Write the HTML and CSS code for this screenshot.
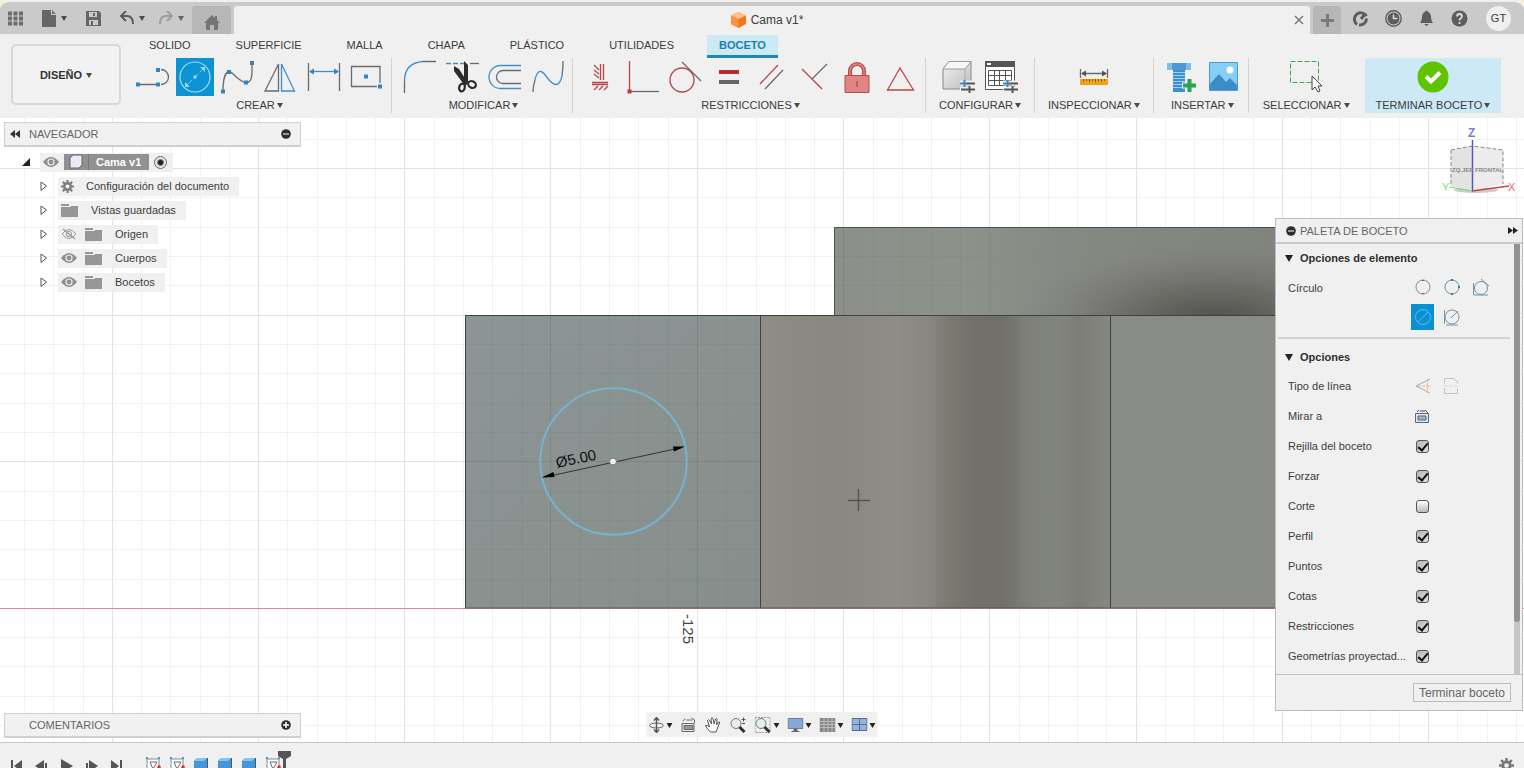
FILE: index.html
```html
<!DOCTYPE html>
<html lang="es">
<head>
<meta charset="utf-8">
<title>Cama v1*</title>
<link rel="stylesheet" href="styles.css">
</head>
<body>
<svg class="defs" aria-hidden="true">
  <defs>
    <linearGradient id="gCube" x1="0" y1="0" x2="1" y2="1"><stop offset="0" stop-color="#f2f2f2"/><stop offset="1" stop-color="#bdbdbd"/></linearGradient>
  </defs>
  <symbol id="caret" viewBox="0 0 6 6"><path d="M0 1h6L3 6z" fill="currentColor"/></symbol>
  <symbol id="eye" viewBox="0 0 16 12"><path d="M0 6Q8-4 16 6 8 16 0 6z" fill="#8f8f8f"/><circle cx="8" cy="6" r="3.6" fill="#f0f0f0"/><circle cx="8" cy="6" r="2.4" fill="#8f8f8f"/></symbol>
  <symbol id="eyeoff" viewBox="0 0 16 12"><path d="M1 6Q8-3 15 6 8 15 1 6z" fill="none" stroke="#9a9a9a"/><circle cx="8" cy="6" r="2.6" fill="none" stroke="#9a9a9a"/><path d="M2 1l12 10" stroke="#9a9a9a" stroke-width="1.4"/></symbol>
  <symbol id="folder" viewBox="0 0 17 13"><path d="M0 0h8v2H0zM0 3h9l1-1h7v11H0z" fill="#969696"/></symbol>
  <symbol id="gear" viewBox="0 0 16 16"><circle cx="8" cy="8" r="4" fill="none" stroke="currentColor" stroke-width="3"/><path d="M8 0v3M8 13v3M0 8h3M13 8h3M2.3 2.3l2.2 2.2M11.5 11.5l2.2 2.2M13.7 2.3l-2.2 2.2M4.5 11.5l-2.2 2.2" stroke="currentColor" stroke-width="2.6"/></symbol>
  <symbol id="closed" viewBox="0 0 8 10"><path d="M1 1v8.500l5.500-4.500z" fill="#fff" stroke="#555"/></symbol>
  <symbol id="minus" viewBox="0 0 10 10"><circle cx="5" cy="5" r="4.800" fill="#2e2e2e"/><path d="M2 5h6" stroke="#bbb" stroke-width="1.500"/></symbol>
  <symbol id="plusdot" viewBox="0 0 10 10"><circle cx="5" cy="5" r="4.800" fill="#2e2e2e"/><path d="M2 5h6M5 2v6" stroke="#fff" stroke-width="1.500"/></symbol>
  <symbol id="sliders" viewBox="0 0 15 13"><path d="M0 3h15M0 9h15" stroke="#f0f0f0" stroke-width="5"/><path d="M6 3.500h9M1 9.500h14" stroke="#555" stroke-width="2"/><path d="M0 3.500h6M4.500 0v7" stroke="#3f87bf" stroke-width="2"/><path d="M9.500 6v7" stroke="#555" stroke-width="2"/></symbol>
  <symbol id="sk" viewBox="0 0 17 17"><rect x="2" y="2" width="12" height="13" fill="#fff" stroke="#7a8fa0"/><path d="M5 5h7l-4 7z" fill="none" stroke="#667"/><path d="M1 1h2M13 1h2" stroke="#4a9bd0" stroke-width="2"/><circle cx="14" cy="10" r="1.800" fill="#d33"/></symbol>
  <symbol id="ext" viewBox="0 0 17 17"><path d="M1 4l3-3h10v12l-2 3H1z" fill="#4596d6"/><path d="M1 4l3-3h10l-3 3z" fill="#86c3ee"/><path d="M14.500 1v14" stroke="#555"/></symbol>
</svg>

<header class="app-head">
  <div class="titlebar">
    <nav class="quick" aria-label="Acceso rápido">
      <button aria-label="Panel de datos"><svg width="15" height="15"><path d="M0 2.500h4M5.500 2.500h4M11 2.500h4M0 7.500h4M5.500 7.500h4M11 7.500h4M0 12.500h4M5.500 12.500h4M11 12.500h4" stroke="#6c6c6c" stroke-width="4"/></svg></button>
      <button aria-label="Archivo"><svg width="14" height="17"><path d="M0 0h9v5h5v12H0z" fill="#666"/><path d="M10 0l4 4h-4z" fill="#777"/></svg><svg class="caret"><use href="#caret"/></svg></button>
      <button aria-label="Guardar"><svg width="15" height="15"><path d="M0 0h13l2 2v13H0z" fill="#666"/><path d="M3 1h8v5H3zM3 9h9v5H3z" fill="#cacaca"/><path d="M7 2h2v3H7zM5 10h2v4H5z" fill="#666"/></svg></button>
      <span class="pair">
        <button aria-label="Deshacer"><svg width="14" height="14"><path d="M1 5h6q6 0 6 8" fill="none" stroke="#5c5c5c" stroke-width="2"/><path d="M6 0L1 5l5 5" fill="none" stroke="#5c5c5c" stroke-width="2"/></svg><svg class="caret"><use href="#caret"/></svg></button>
        <button class="off" aria-label="Rehacer"><svg width="14" height="14"><path d="M13 5H7q-6 0-6 8" fill="none" stroke="#929292" stroke-width="2"/><path d="M8 0l5 5-5 5" fill="none" stroke="#929292" stroke-width="2"/></svg><svg class="caret"><use href="#caret"/></svg></button>
      </span>
    </nav>
    <button class="home" aria-label="Inicio"><svg width="16" height="15"><path d="M8 0l3 3V1h2v4l3 3h-2v7h-4v-5H6v5H2V8H0z" fill="#757575"/></svg></button>
    <div class="doc-tab">
      <span class="doc-name"><svg width="15" height="16"><path d="M7.500 0L15 3.500v8.500L7.500 16 0 12V3.500z" fill="#f07818"/><path d="M7.500 0L15 3.500 7.500 7 0 3.500z" fill="#ffc089"/><path d="M0 3.500L7.500 7v9L0 12z" fill="#ff9440"/></svg>Cama v1*</span>
      <button aria-label="Cerrar"><svg width="10" height="10"><path d="M1 1l8 8M9 1L1 9" stroke="#777" stroke-width="1.500"/></svg></button>
    </div>
    <button class="newtab" aria-label="Nuevo"><svg width="13" height="13"><path d="M6.500 0v13M0 6.500h13" stroke="#7a7a7a" stroke-width="3"/></svg></button>
    <div class="account">
      <button aria-label="Extensiones"><svg width="17" height="17"><path d="M5 14.500A6.500 6.500 0 1 1 14.500 6" fill="none" stroke="#5d5d5d" stroke-width="3"/><path d="M14.500 8.500A6.500 6.500 0 0 1 7 15" fill="none" stroke="#5d5d5d" stroke-width="3"/><path d="M9 9l4-5" stroke="#5d5d5d" stroke-width="3"/></svg></button>
      <button aria-label="Trabajos"><svg width="17" height="17"><circle cx="8.500" cy="8.500" r="7.700" fill="none" stroke="#5d5d5d" stroke-width="1.400"/><circle cx="8.500" cy="8.500" r="6" fill="#5d5d5d"/><path d="M8.500 4.500v4h4" fill="none" stroke="#ddd" stroke-width="1.500"/></svg></button>
      <button aria-label="Notificaciones"><svg width="15" height="16"><path d="M1 13q2-2 2-7 1-4 3.500-4.500a1 1 0 0 1 2 0Q11 2 12 6q0 5 2 7zM5 14h5l-2.500 2z" fill="#5d5d5d"/></svg></button>
      <button aria-label="Ayuda"><svg width="17" height="17"><circle cx="8.500" cy="8.500" r="8" fill="#5d5d5d"/><path d="M6 6.500q0-2.500 2.500-2.500T11 6.500q0 1-1.500 2-1 .500-1 2M8.500 12v2" fill="none" stroke="#ddd" stroke-width="1.800"/></svg></button>
      <button class="avatar">GT</button>
    </div>
  </div>

  <div class="ribbon">
    <button class="workspace">DISEÑO <svg class="caret"><use href="#caret"/></svg></button>
    <div class="ribbon-main">
      <nav class="tabs" aria-label="Fichas">
        <button>SOLIDO</button><button>SUPERFICIE</button><button>MALLA</button><button>CHAPA</button><button>PLÁSTICO</button><button>UTILIDADES</button><button class="current">BOCETO</button>
      </nav>
      <div class="groups">
        <section class="group first">
          <div class="tools">
            <button aria-label="Línea"><svg class="ic"><path d="M5 26.500h20M28 11.500a7.500 7.500 0 0 1 0 15" class="g"/><path d="M3 24.500h4v4H3zM23 24.500h4v4h-4zM23 10h4v4h-4z" class="bf"/></svg></button>
            <button class="on" aria-label="Círculo"><svg class="ic"><circle cx="19" cy="19" r="15" fill="none" stroke="#a8dcf5" stroke-width="1.200"/><path d="M11 27L27 11" stroke="#7cc8ee" stroke-dasharray="7 2"/><path d="M9 29v-5l5 5zM29 9v5l-5-5zM17.500 17.500h3v3h-3z" fill="#9ad6f4"/></svg></button>
            <button aria-label="Spline"><svg class="ic"><path d="M4 33C4 20 7 14 10 13.500S20 24 27 24.500 33 14 33 5" class="g"/><path d="M2 31.500h4v4H2zM8 12h4v4H8zM25 22.500h4v4h-4zM31 3h4v4h-4z" class="bf"/></svg></button>
            <button aria-label="Simetría"><svg class="ic"><path d="M3 33L16.500 6v27z" class="g"/><path d="M19.500 6v27h13z" class="b"/></svg></button>
            <button aria-label="Cota"><svg class="ic"><path d="M3.500 5v28M34.500 5v28" class="g"/><path d="M5 13.500h28" class="b"/><path d="M4 13.500l5-3v6zM34 13.500l-5-3v6z" class="bf"/></svg></button>
            <button aria-label="Rectángulo"><svg class="ic"><path d="M32 25V8.500H3.500v20H29" class="g"/><path d="M16 16.500h4v4h-4zM30 26.500h4v4h-4z" class="bf"/></svg></button>
          </div>
          <button class="glabel">CREAR <svg class="caret"><use href="#caret"/></svg></button>
        </section>
        <section class="group">
          <div class="tools">
            <button aria-label="Empalme"><svg class="ic"><path d="M4.500 23v12M23 3.500h13" class="g"/><path d="M4.500 23q0-18 18.500-19.500" class="b"/></svg></button>
            <button aria-label="Recortar"><svg class="ic"><path d="M3 5.500h18" class="b" stroke-dasharray="5 2"/><path d="M27 5.500h9" class="g"/><path d="M21 3l4 4v17l-4 1zM11 8l5 3 9 14-3 3L11 13z" fill="#2c2c2c"/><ellipse cx="19" cy="29.500" rx="2.800" ry="4" fill="none" stroke="#2c2c2c" stroke-width="2.200" transform="rotate(15 19 29.500)"/><ellipse cx="29" cy="26.500" rx="4" ry="3.200" fill="none" stroke="#2c2c2c" stroke-width="2.200" transform="rotate(25 29 26.500)"/></svg></button>
            <button aria-label="Desfase"><svg class="ic"><path d="M35 7.500H14.500a11.500 11.500 0 0 0 0 23H35" class="b"/><path d="M35 12.500H17a6.500 6.500 0 0 0 0 13h18" class="g"/></svg></button>
            <button aria-label="Curva"><svg class="ic"><path d="M4 34q0-6 2-12M33 18q1-7 1-15" class="g"/><path d="M6 22q2-9 6-8.500C16 14 21 27 27 26.500q4 0 6-8.500" class="b"/></svg></button>
          </div>
          <button class="glabel">MODIFICAR <svg class="caret"><use href="#caret"/></svg></button>
        </section>
        <section class="group">
          <div class="tools">
            <button aria-label="Fijar horizontal o vertical"><svg class="ic"><path d="M19.500 6v16M22.500 6v16M11 24.500h16M11 26.500h16" class="r"/><path d="M13 7l5 5M13 12l5 4M13 16l5 4M13 32l4-4M18 32l4-4M23 32l4-4" class="r"/></svg></button>
            <button aria-label="Coincidente"><svg class="ic"><path d="M5.500 3v30" class="r"/><path d="M7 33.500h28" class="g"/><path d="M3.500 31.500h4v4h-4z" fill="#b93a3a"/></svg></button>
            <button aria-label="Tangente"><svg class="ic"><circle cx="15" cy="22" r="12" class="r"/><path d="M15 4l19 19" class="g"/></svg></button>
            <button aria-label="Igual"><svg class="ic"><path d="M9 12h20v4H9z" fill="#b52f30"/><path d="M9 22h20v4H9z" fill="#666"/></svg></button>
            <button aria-label="Paralelo"><svg class="ic"><path d="M7 26L25 7" class="r"/><path d="M12 31l18-19" class="g"/></svg></button>
            <button aria-label="Perpendicular"><svg class="ic"><path d="M6 11l20 20" class="r"/><path d="M16 21L31 6" class="g"/></svg></button>
            <button aria-label="Bloquear"><svg class="ic"><path d="M11 17v-4a7 7 0 0 1 14 0v4" fill="none" stroke="#b94a4a" stroke-width="4"/><path d="M11 17v-4a7 7 0 0 1 14 0v4" fill="none" stroke="#e08a8a" stroke-width="1.500"/><path d="M6 17.500h24v17H6z" fill="#e08585" stroke="#b94a4a"/><path d="M18 23v6" class="r"/></svg></button>
            <button aria-label="Simétrico"><svg class="ic"><path d="M18 10L5.500 32h26z" class="r"/></svg></button>
          </div>
          <button class="glabel">RESTRICCIONES <svg class="caret"><use href="#caret"/></svg></button>
        </section>
        <section class="group wide">
          <div class="tools">
            <button aria-label="Configurar modelo"><svg class="ic"><path d="M4 11l6-7.500h22V25l-5 6H4z" fill="url(#gCube)" stroke="#888"/><path d="M4 11l6-7.500h22L26 11z" fill="#f7f7f7" stroke="#999"/><path d="M26 11v20" stroke="#aaa"/><use href="#sliders" x="21" y="22" width="15" height="13"/></svg></button>
            <button aria-label="Tabla de configuración"><svg class="ic"><path d="M3.500 3.500h29v28h-29z" fill="#fff" stroke="#555"/><path d="M3 3h30v6H3z" fill="#555"/><path d="M5 5h4v2H5z" fill="#fff"/><path d="M6.500 12.500h23v15h-23zM6 17.500h24M6 22.500h24M12.500 12v15M17.500 12v15M23.500 12v15" fill="none" stroke="#555"/><use href="#sliders" x="21" y="22" width="15" height="13"/></svg></button>
          </div>
          <button class="glabel">CONFIGURAR <svg class="caret"><use href="#caret"/></svg></button>
        </section>
        <section class="group wide">
          <div class="tools">
            <button aria-label="Medir"><svg class="ic"><path d="M5.500 11v9M32.500 11v9M7 15.500h24" class="g"/><path d="M6 15.500l5-3v6zM32 15.500l-5-3v6z" fill="#555"/><path d="M5 21h28v6H5z" fill="#f0a31a"/><path d="M8.500 21v3M11.500 21v2M14.500 21v3M17.500 21v2M20.500 21v3M23.500 21v2M26.500 21v3M29.500 21v2" stroke="#8a5a00"/></svg></button>
          </div>
          <button class="glabel">INSPECCIONAR <svg class="caret"><use href="#caret"/></svg></button>
        </section>
        <section class="group">
          <div class="tools">
            <button aria-label="Insertar fijación"><svg class="ic"><path d="M5 5h24v7H5z" fill="#4d9ad0"/><path d="M5 5h5v7H5zM24 5h5v7h-5z" fill="#7fbce6"/><path d="M11 12h12v22H11z" fill="#3d8fd0"/><path d="M11 14.500h12M11 17.500h12M11 20.500h12M11 23.500h12M11 26.500h12M11 29.500h12" stroke="#9ad2f5"/><path d="M27.500 20v15M20 27.500h15" stroke="#f0f0f0" stroke-width="6"/><path d="M27.500 21v13M21 27.500h13" stroke="#2aa44f" stroke-width="4"/></svg></button>
            <button aria-label="Insertar imagen"><svg class="ic"><path d="M4.500 4.500h28v28h-28z" fill="#86cdf8" stroke="#4a9bd0"/><path d="M5 26l9-10 7 8 4-4 7 7v5H5z" fill="#3a8dc6"/><circle cx="25" cy="12" r="3.500" fill="#fff"/></svg></button>
          </div>
          <button class="glabel">INSERTAR <svg class="caret"><use href="#caret"/></svg></button>
        </section>
        <section class="group wide last">
          <div class="tools">
            <button aria-label="Seleccionar"><svg class="ic"><path d="M3.500 3.500h28v21h-28z" fill="none" stroke="#3aa75a" stroke-dasharray="5 2"/><path d="M25 18v14l3-3 3 5 2-1-2-5h4z" fill="#fff" stroke="#444"/></svg></button>
          </div>
          <button class="glabel">SELECCIONAR <svg class="caret"><use href="#caret"/></svg></button>
        </section>
        <section class="group finish">
          <div class="tools">
            <button aria-label="Terminar boceto"><svg class="ic"><circle cx="19" cy="19" r="15.500" fill="#5fc400"/><path d="M12 18.500l5 5 9-9" fill="none" stroke="#fff" stroke-width="4"/></svg></button>
          </div>
          <button class="glabel">TERMINAR BOCETO <svg class="caret"><use href="#caret"/></svg></button>
        </section>
      </div>
    </div>
  </div>
</header>

<main class="stage">
  <svg class="scene" viewBox="0 118 1524 624" preserveAspectRatio="xMidYMid slice" role="img" aria-label="Boceto">
    <defs>
      <linearGradient id="gLeft" x1="0" y1="0" x2="1" y2="1"><stop offset="0" stop-color="#8b9695"/><stop offset=".5" stop-color="#8a9290"/><stop offset="1" stop-color="#878f8d"/></linearGradient>
      <linearGradient id="gMid" gradientUnits="userSpaceOnUse" x1="761" y1="0" x2="1110" y2="0"><stop offset="0" stop-color="#8f8c86"/><stop offset=".22" stop-color="#8a8780"/><stop offset=".39" stop-color="#908d87"/><stop offset=".48" stop-color="#888680"/><stop offset=".54" stop-color="#7a7a70"/><stop offset=".62" stop-color="#706f69"/><stop offset=".69" stop-color="#706f6a"/><stop offset=".76" stop-color="#7d7f78"/><stop offset=".85" stop-color="#82857e"/><stop offset=".91" stop-color="#7b7d76"/><stop offset="1" stop-color="#868981"/></linearGradient>
      <linearGradient id="gTop" gradientUnits="userSpaceOnUse" x1="835" y1="0" x2="1275" y2="0"><stop offset="0" stop-color="#8d908a"/><stop offset=".3" stop-color="#8c918a"/><stop offset=".6" stop-color="#858781"/><stop offset="1" stop-color="#81837d"/></linearGradient>
      <radialGradient id="gDark" gradientUnits="userSpaceOnUse" cx="0" cy="0" r="1" gradientTransform="translate(1215 322) scale(200 78)"><stop offset="0" stop-color="#4b4b47" stop-opacity=".95"/><stop offset=".45" stop-color="#555550" stop-opacity=".5"/><stop offset="1" stop-color="#777" stop-opacity="0"/></radialGradient>
      <linearGradient id="gFade" gradientUnits="userSpaceOnUse" x1="900" y1="0" x2="1110" y2="0"><stop offset="0" stop-color="#fff"/><stop offset="1" stop-color="#000"/></linearGradient>
      <mask id="mFade"><path d="M465 315h296v293H465z" fill="#fff"/><path d="M835 227h440v88H835z" fill="url(#gFade)"/></mask>
      <g id="grid">
        <path stroke-opacity=".45" d="M24.500 118v624M53.500 118v624M83.500 118v624M141.500 118v624M170.500 118v624M200.500 118v624M229.500 118v624M287.500 118v624M317.500 118v624M346.500 118v624M375.500 118v624M434.500 118v624M463.500 118v624M492.500 118v624M522.500 118v624M580.500 118v624M609.500 118v624M638.500 118v624M668.500 118v624M726.500 118v624M756.500 118v624M785.500 118v624M814.500 118v624M873.500 118v624M902.500 118v624M931.500 118v624M960.500 118v624M1019.500 118v624M1048.500 118v624M1077.500 118v624M1106.500 118v624M1165.500 118v624M1194.500 118v624M1223.500 118v624M1253.500 118v624M1311.500 118v624M1340.500 118v624M1370.500 118v624M1399.500 118v624M1457.500 118v624M1487.500 118v624M1516.500 118v624M0 139.500h1524M0 197.500h1524M0 227.500h1524M0 256.500h1524M0 285.500h1524M0 344.500h1524M0 373.500h1524M0 403.500h1524M0 432.500h1524M0 491.500h1524M0 520.500h1524M0 549.500h1524M0 579.500h1524M0 637.500h1524M0 666.500h1524M0 696.500h1524M0 725.500h1524"/>
        <path d="M112.500 118v624M258.500 118v624M404.500 118v624M550.500 118v624M697.500 118v624M843.500 118v624M989.500 118v624M1136.500 118v624M1282.500 118v624M1428.500 118v624M0 168.500h1524M0 315.500h1524M0 461.500h1524"/>
      </g>
    </defs>
    <path d="M0 118h1524v624H0z" fill="#fff"/>
    <use href="#grid" stroke="#e2e2e2"/>
    <path d="M0 608.500h1524" stroke="#d98a94"/>
    <path d="M834.500 227.500h500v88h-500z" fill="url(#gTop)"/>
    <path d="M834.500 227.500h500v88h-500z" fill="url(#gDark)" stroke="#4d504d"/>
    <path d="M465.500 315.500h295.500v292.500h-295.500z" fill="url(#gLeft)"/>
    <path d="M761 315.500h349.500v292.500h-349.500z" fill="url(#gMid)"/>
    <path d="M1110 315.500h225v292.500h-225z" fill="#898c86"/>
    <use href="#grid" stroke="#4c5a58" opacity=".2" mask="url(#mFade)"/>
    <path d="M465.500 608V315.500h870M760.500 315v293M1110.500 315v293" fill="none" stroke="#3c423f"/>
    <path d="M465 608h870" stroke="#6b4c50"/>
    <circle cx="613.500" cy="461.500" r="73.200" fill="none" stroke="#78b2cd" stroke-width="2"/>
    <path d="M545 477l137-29.500" stroke="#333"/>
    <path d="M541.500 477.500l12-5.500 1 5zM685 446.500l-12 0 1 5z" fill="#000"/>
    <circle cx="613" cy="461.500" r="3.500" fill="#eee" stroke="#777"/>
    <text x="557" y="468" transform="rotate(-12 557 468)" class="dim">Ø5.00</text>
    <text x="683" y="614" transform="rotate(90 683 614)" class="axis">-125</text>
    <path d="M848 500.500h22M858.500 489v22" stroke="#55544f" stroke-width="1.500"/>
  </svg>

  <div class="overlay">
    <div class="left">
      <aside class="browser">
        <h2 class="bar"><svg width="10" height="8"><path d="M5 0v8L0 4zM10 0v8L5 4z" fill="#333"/></svg><span>NAVEGADOR</span><button aria-label="Contraer"><svg width="10" height="10"><use href="#minus"/></svg></button></h2>
        <ul class="tree">
          <li class="root"><svg width="8" height="8"><path d="M8 0v8H0z" fill="#222"/></svg><div class="node"><svg width="16" height="12"><use href="#eye"/></svg><span class="doc"><svg width="22" height="16"><path d="M3 4l3-3h9v10l-3 3H3z" fill="#e9ebf2" stroke="#667"/><path d="M21.500 0v16" stroke="#777"/></svg>Cama v1</span><input type="radio" checked aria-label="Activar componente"></div></li>
          <li><svg width="8" height="10"><use href="#closed"/></svg><div class="node conf"><svg width="13" height="13" color="#7c7c7c"><use href="#gear"/></svg><span>Configuración del documento</span></div></li>
          <li><svg width="8" height="10"><use href="#closed"/></svg><div class="node"><svg width="17" height="13"><use href="#folder"/></svg><span>Vistas guardadas</span></div></li>
          <li><svg width="8" height="10"><use href="#closed"/></svg><div class="node"><svg width="16" height="12"><use href="#eyeoff"/></svg><svg width="17" height="13"><use href="#folder"/></svg><span>Origen</span></div></li>
          <li><svg width="8" height="10"><use href="#closed"/></svg><div class="node"><svg width="16" height="12"><use href="#eye"/></svg><svg width="17" height="13"><use href="#folder"/></svg><span>Cuerpos</span></div></li>
          <li><svg width="8" height="10"><use href="#closed"/></svg><div class="node"><svg width="16" height="12"><use href="#eye"/></svg><svg width="17" height="13"><use href="#folder"/></svg><span>Bocetos</span></div></li>
        </ul>
      </aside>
      <h2 class="bar comments"><span>COMENTARIOS</span><button aria-label="Expandir"><svg width="10" height="10"><use href="#plusdot"/></svg></button></h2>
    </div>

    <div class="viewbar" role="toolbar" aria-label="Navegación">
      <button aria-label="Órbita"><svg width="16" height="16"><ellipse cx="8" cy="8.500" rx="7" ry="2.500" fill="none" stroke="#666"/><path d="M8 1v14M5.500 3.500L8 .500l2.500 3M5.500 12.500L8 15.500l2.500-3" fill="none" stroke="#555" stroke-width="1.400"/></svg><svg class="caret"><use href="#caret"/></svg></button>
      <button aria-label="Mirar a"><svg width="16" height="16"><path d="M1.500 6.500h12v8h-12z" fill="#eee" stroke="#666"/><path d="M3.500 8.500h9v4h-9z" fill="#999" stroke="#666"/><path d="M2 4l3-2M6 3h6M11 1l3 2v3" fill="none" stroke="#666"/></svg></button>
      <button aria-label="Encuadre"><svg width="17" height="16"><path d="M5 14Q2 11 1 8.500q1.500-1 4 1.500L3 3.500q1-1.500 2 0L7 7 6.500 1.500q1-1.500 2 0L9.500 7l1.500-5q1.500-1 1.500.500L12 8l2-3q1.500-.500 1 1l-2 5-1.500 4H6z" fill="#fff" stroke="#555"/></svg></button>
      <button aria-label="Zoom"><svg width="17" height="16"><circle cx="6.500" cy="6.500" r="5" fill="#e4efe9" stroke="#777"/><path d="M10 10l5 5" stroke="#333" stroke-width="3"/><path d="M12 2.500h4M14 .500v4M12.500 6.500h3" stroke="#555"/></svg></button>
      <button aria-label="Ventana de zoom"><svg width="17" height="16"><path d="M.500.500h15v15H.500z" fill="none" stroke="#999" stroke-dasharray="2 1"/><circle cx="6.500" cy="6.500" r="5" fill="#e4efe9" stroke="#777"/><path d="M10 10l5 5" stroke="#333" stroke-width="3"/></svg><svg class="caret"><use href="#caret"/></svg></button>
      <button aria-label="Visualización"><svg width="16" height="16"><path d="M.500 1.500h15v10H.500z" fill="#85a8d6" stroke="#6c7f99"/><path d="M6 12h4v2h2v1H4v-1h2z" fill="#666"/></svg><svg class="caret"><use href="#caret"/></svg></button>
      <button aria-label="Rejilla"><svg width="16" height="16"><path d="M0 1h16v14H0z" fill="#888"/><path d="M0 4.500h16M0 7.500h16M0 10.500h16M4.500 1v14M8.500 1v14M12.500 1v14" stroke="#bbb"/></svg><svg class="caret"><use href="#caret"/></svg></button>
      <button aria-label="Ventanas gráficas"><svg width="16" height="16"><path d="M.500 1.500h15v12H.500z" fill="#94b4df" stroke="#566d8d"/><path d="M8 2v12M1 7.500h14" stroke="#566d8d"/></svg><svg class="caret"><use href="#caret"/></svg></button>
    </div>

    <div class="right">
      <svg class="cube" width="80" height="82" role="img" aria-label="Cubo de visualización">
        <ellipse cx="36" cy="66" rx="22" ry="3" fill="#ccc"/>
        <path d="M11 26l21-4v45l-21-5z" fill="#e3e3e3"/><path d="M32 22l31 4v34l-31 7z" fill="#ececec"/>
        <path d="M11 26l21-4 31 4v34M11 26v36" fill="none" stroke="#888" stroke-dasharray="4 2"/>
        <path d="M32 67L9 63" stroke="#78d878"/><path d="M32 67l37-5" stroke="#c64848" stroke-width="1.500"/><path d="M32.500 16v51" stroke="#5854c8" stroke-width="1.500"/>
        <text x="28" y="13" class="ax" fill="#7a7ad6">Z</text><text x="2" y="67" class="ax small" fill="#7fe07f">Y</text><text x="68" y="67" class="ax small" fill="#e06c6c">X</text>
        <text x="12" y="48" class="face">ZQ.JER</text><text x="35" y="48" class="face">FRONTAL</text>
      </svg>
      <aside class="palette">
        <h2 class="pal-head"><svg width="10" height="10"><use href="#minus"/></svg><span>PALETA DE BOCETO</span><svg width="10" height="7"><path d="M0 0v7l5-3.500zM5 0v7l5-3.500z" fill="#222"/></svg></h2>
        <div class="pal-body">
          <div class="pal-rows">
            <h3><svg width="8" height="7"><path d="M0 0h8L4 7z" fill="#222"/></svg>Opciones de elemento</h3>
            <div class="row tall"><span>Círculo</span>
              <div class="kinds">
                <button aria-label="Centro y diámetro"><svg class="k"><circle cx="11" cy="13" r="7" class="kc"/><path d="M11 6v1M11 19v1" class="kb"/></svg></button>
                <button aria-label="Dos puntos"><svg class="k"><circle cx="11" cy="13" r="7" class="kc"/><path d="M10 6h2M17 13h2M10 20h2" class="kb"/></svg></button>
                <button aria-label="Dos tangentes"><svg class="k"><circle cx="11" cy="14" r="6.500" class="kc"/><path d="M11 5l8 7M4 21h14M3.500 9v12" class="kb thin"/></svg></button>
                <button class="on" aria-label="Diámetro"><svg class="k"><circle cx="11" cy="13" r="7.500" fill="none" stroke="#5bbcec"/><path d="M6 18L16 8" stroke="#5bbcec"/></svg></button>
                <button aria-label="Tres tangentes"><svg class="k"><circle cx="11" cy="13" r="7" class="kc"/><path d="M10 14l7-7M3.500 6v14M5 21h12" class="kb thin"/></svg></button>
              </div>
            </div>
            <hr>
            <h3><svg width="8" height="7"><path d="M0 0h8L4 7z" fill="#222"/></svg>Opciones</h3>
            <div class="row"><span>Tipo de línea</span><div class="kinds"><button aria-label="Construcción"><svg class="k"><path d="M18 6L4 13l14 7" fill="none" stroke="#aaa"/><path d="M6 13h13M15.500 6v14" stroke="#edb29b" stroke-dasharray="3 1"/></svg></button><button aria-label="Línea de centro"><svg class="k"><path d="M3.500 11V5.500h9l4 3v2M3.500 15v5.500h13v-5" fill="none" stroke="#c3c3c3"/><path d="M3 13h15" stroke="#ddd" stroke-dasharray="4 1"/></svg></button></div></div>
            <div class="row"><span>Mirar a</span><button class="look" aria-label="Mirar a"><svg width="15" height="15"><path d="M.500 4.500h13v9H.500z" fill="#dfe6ee" stroke="#59697a"/><path d="M3 7h8v4H3z" fill="#9fb0c0" stroke="#59697a"/><path d="M2 3l2-2M5 2h5M10 1l3 3" fill="none" stroke="#445"/></svg></button></div>
            <label class="row"><span>Rejilla del boceto</span><input type="checkbox" checked></label>
            <label class="row"><span>Forzar</span><input type="checkbox" checked></label>
            <label class="row"><span>Corte</span><input type="checkbox"></label>
            <label class="row"><span>Perfil</span><input type="checkbox" checked></label>
            <label class="row"><span>Puntos</span><input type="checkbox" checked></label>
            <label class="row"><span>Cotas</span><input type="checkbox" checked></label>
            <label class="row"><span>Restricciones</span><input type="checkbox" checked></label>
            <label class="row"><span>Geometrías proyectad...</span><input type="checkbox" checked></label>
          </div>
          <div class="scroll"><div class="thumb"></div></div>
        </div>
        <div class="pal-foot"><button>Terminar boceto</button></div>
      </aside>
    </div>
  </div>
</main>

<footer class="timeline">
  <div class="play">
    <button aria-label="Inicio"><svg width="13" height="14"><path d="M1 1h2v12H1zM12 1v12L4 7z" fill="#555"/></svg></button>
    <button aria-label="Paso atrás"><svg width="13" height="14"><path d="M9 1v12L0 7zM10 4h2v8h-2z" fill="#555"/></svg></button>
    <button aria-label="Reproducir"><svg width="13" height="14"><path d="M1 0v14l12-7z" fill="#555"/></svg></button>
    <button aria-label="Paso adelante"><svg width="13" height="14"><path d="M4 1v12l9-6zM1 4h2v8H1z" fill="#555"/></svg></button>
    <button aria-label="Fin"><svg width="13" height="14"><path d="M1 1v12l8-6zM10 1h2v12h-2z" fill="#555"/></svg></button>
  </div>
  <div class="steps">
    <svg><use href="#sk"/></svg><svg><use href="#sk"/></svg><svg><use href="#ext"/></svg><svg><use href="#ext"/></svg><svg><use href="#ext"/></svg><svg><use href="#sk"/></svg>
  </div>
  <svg class="marker"><path d="M0 0h13v5l-5 3v14H5V8L0 5z" fill="#555"/></svg>
  <button class="settings" aria-label="Ajustes"><svg width="15" height="15" color="#777"><use href="#gear"/></svg></button>
</footer>
</body>
</html>
```
FILE: styles.css
```css
* { box-sizing: border-box; }
html, body { height: 100%; }
body { margin: 0; display: flex; flex-direction: column; overflow: hidden; background: #f0f0f0; color: #3c3c3c; font: 11px/14px "Liberation Sans", Arial, sans-serif; }
button { display: flex; align-items: center; justify-content: center; padding: 0; border: 0; background: none; color: inherit; font: inherit; white-space: nowrap; }
h2, h3, ul { margin: 0; padding: 0; font: inherit; list-style: none; }
svg { display: block; flex: none; }
.defs { position: absolute; width: 0; height: 0; }
.caret { width: 6px; height: 6px; color: #4a4a4a; }

.app-head { flex: none; background: #f3f0dc; }
.titlebar { display: flex; align-items: flex-end; height: 34px; border-top: 2px solid #f0f0f0; background: #cacaca; border-radius: 10px 10px 0 0; }
.quick { display: flex; align-items: center; gap: 19px; height: 32px; padding: 0 8px; }
.quick button { gap: 5px; }
.quick .off { opacity: .8; }
.pair { display: flex; gap: 14px; }
.home { width: 39px; height: 28px; margin-right: 3px; padding-top: 4px; background: #b7b7b7; border-radius: 3px 3px 0 0; }
.doc-tab { flex: 1; display: flex; align-items: center; height: 28px; padding: 0 6px; background: #f0f0f0; border-radius: 4px 4px 0 0; font-size: 12px; }
.doc-name { flex: 1; display: flex; align-items: center; justify-content: center; gap: 5px; }
.newtab { width: 28px; height: 28px; margin-left: 3px; background: #b7b7b7; border-radius: 3px 3px 0 0; }
.account { display: flex; align-items: center; gap: 16px; height: 32px; padding: 0 13px 0 11px; }
.account button { min-width: 17px; }
.account .avatar { width: 25px; height: 25px; margin-left: 2px; border-radius: 50%; background: #efefef; }

.ribbon { display: flex; height: 84px; padding-left: 11px; background: #f0f0f0; }
.workspace { width: 110px; height: 61px; margin: 10px 4px 0 0; gap: 4px; border: 2px solid #d8d8d8; border-radius: 5px; background: #f2f2f2; font-weight: bold; color: #333; }
.ribbon-main { flex: 1; }
.tabs { display: flex; gap: 21px; padding-left: 12px; height: 24px; }
.tabs button { height: 24px; padding: 0 12px 2px; }
.tabs .current { padding-bottom: 0; border-bottom: 3px solid #1e86b8; border-top: 1px solid #f0f0f0; background: #cde9f4; color: #1b80b2; font-weight: bold; }
.groups { display: flex; align-items: flex-start; }
.group { display: flex; flex-direction: column; align-items: center; height: 55px; padding: 0 5px 0 8px; border-right: 1px solid #d2d2d2; }
.group.wide { padding: 0 13px; }
.group.last { border-right: 0; padding: 0 15px 0 14px; }
.group.finish { border: 0; padding: 0 11px; background: #cce9f5; }
.tools { display: flex; gap: 5px; }
.tools button { width: 38px; height: 38px; }
.tools .on { background: #0b93d4; }
.ic { width: 38px; height: 38px; }
.g, .b, .r { fill: none; stroke-width: 1.3px; }
.g { stroke: #6b6b6b; }
.b { stroke: #4190cb; }
.r { stroke: #b94646; }
.bf { fill: #3683bd; }
.glabel { gap: 2px; height: 18px; }

.stage { position: relative; flex: 1; min-height: 0; overflow: hidden; }
.scene { width: 100%; height: 100%; }
.dim { font-size: 15px; fill: #111; }
.axis { font-size: 15px; fill: #444; }
.overlay { position: absolute; inset: 0; display: flex; align-items: stretch; justify-content: space-between; padding: 4px 1px 4px 4px; }
.left { display: flex; flex-direction: column; justify-content: space-between; width: 297px; }
.bar { display: flex; align-items: center; height: 25px; gap: 9px; padding: 0 9px 0 5px; border: solid #cfcfcf; border-width: 1px 1px 2px; background: #f1f1f1; color: #666; }
.bar span { flex: 1; }
.comments { padding-left: 24px; }
.tree { padding: 3px 0 0 18px; }
.tree li { display: flex; align-items: center; gap: 10px; height: 24px; padding-left: 18px; }
.tree .root { padding-left: 0; }
.node { display: flex; align-items: center; gap: 8px; height: 19px; padding: 0 10px 0 3px; background: #f0f0f0; white-space: nowrap; }
.node span { padding-left: 5px; }
.node.conf span { padding-left: 4px; }
.root .node { gap: 5px; padding-right: 6px; }
.root .doc { display: flex; align-items: center; gap: 7px; height: 16px; padding: 0 8px 0 3px; background: #919191; color: #fff; font-weight: bold; }
.root input { appearance: none; width: 13px; height: 13px; margin: 0; border: 1px solid #667; border-radius: 50%; background: radial-gradient(circle, #222 0 2px, #e4e6ee 4px); }

.viewbar { position: absolute; left: 50%; bottom: 5px; transform: translateX(-50%); display: flex; gap: 8px; height: 25px; padding: 0 2px; background: #f0f0f0; }
.viewbar button { gap: 2px; }
.viewbar .caret { color: #222; }
.right { display: flex; flex-direction: column; align-items: flex-end; width: 248px; }
.cube { margin: 2px 3px 12px 0; }
.ax { font: bold 12px "Liberation Sans", sans-serif; }
.ax.small { font-size: 11px; font-weight: normal; }
.face { font: bold 6px "Liberation Sans", sans-serif; fill: #858585; }
.palette { display: flex; flex-direction: column; width: 100%; border: 1px solid #bdbdbd; background: #f0f0f0; }
.pal-head { display: flex; align-items: center; gap: 4px; height: 25px; padding: 0 4px 0 10px; border-bottom: 2px solid #cacaca; color: #666; }
.pal-head span { flex: 1; }
.pal-body { display: flex; }
.pal-rows { flex: 1; padding: 0 4px 3px 0; }
.pal-rows h3 { display: flex; align-items: center; gap: 7px; height: 28px; padding-left: 9px; font-weight: bold; color: #2e2e2e; }
.row { display: flex; align-items: center; height: 30px; padding-left: 12px; }
.row > span { width: 123px; }
.row.tall { height: 60px; align-items: flex-start; margin-top: 2px; }
.row.tall > span { line-height: 28px; }
.kinds { display: grid; grid-template-columns: repeat(3, 23px); gap: 4px 6px; }
.kinds button { width: 23px; height: 26px; }
.kinds .on { background: #0b90d2; }
.k { width: 22px; height: 26px; }
.kc { fill: none; stroke: #7f8b92; }
.kb { fill: none; stroke: #2f7fb0; stroke-width: 2px; }
.kb.thin { stroke-width: 1px; stroke: #6a97b3; }
.look { margin-left: 4px; }
hr { height: 2px; margin: 3px 0 4px 2px; border: 0; background: #d2d2d2; }
.row input { appearance: none; display: grid; place-items: center; width: 13px; height: 13px; margin: 0 0 0 5px; border: 1px solid #555; border-radius: 3px; background: linear-gradient(#fff, #bbb); }
.row input:checked { background: linear-gradient(135deg, #b4b4b4, #e2e2e2); }
.row input:checked::after { content: ""; width: 4px; height: 8px; margin-bottom: 2px; border: solid #111; border-width: 0 2px 2px 0; transform: rotate(40deg); }
.scroll { width: 6px; margin-right: 2px; background: #c4c4c4; }
.thumb { height: 88%; border-radius: 0 0 3px 3px; background: #929292; }
.pal-foot { display: flex; align-items: center; justify-content: flex-end; height: 36px; padding-right: 11px; border-top: 1px solid #c2c2c2; }
.pal-foot button { height: 19px; padding: 0 5px; border: 1px solid #bcbcbc; color: #666; font-size: 12px; }

.timeline { flex: none; display: flex; align-items: flex-start; height: 26px; padding: 0 10px; border-top: 1px solid #c8c8c8; background: #f0f0f0; overflow: hidden; }
.play { display: flex; gap: 12px; padding-top: 16px; }
.steps { display: flex; gap: 7px; padding: 14px 0 0 22px; }
.steps svg { width: 17px; height: 17px; }
.marker { width: 13px; height: 22px; margin: 8px 0 0 -4px; }
.settings { margin: 15px 0 0 auto; }
```
